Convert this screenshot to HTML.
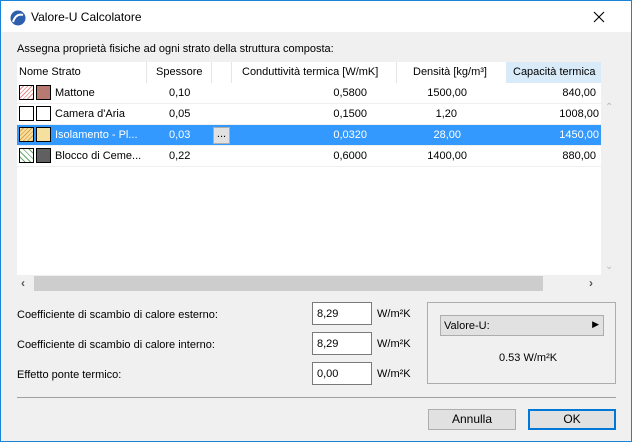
<!DOCTYPE html>
<html><head><meta charset="utf-8"><style>
*{box-sizing:border-box;margin:0;padding:0}
body{width:632px;height:442px;overflow:hidden;background:#f0f0f0;font-family:"Liberation Sans",sans-serif;font-size:11px;color:#000;position:relative}
.win{position:absolute;left:0;top:0;width:632px;height:442px;border:1px solid #1883d7;background:#f0f0f0}
.title{position:absolute;left:0;top:0;width:630px;height:31px;background:#fff}
.a{position:absolute;white-space:nowrap}
.tbl{position:absolute;left:16px;top:61px;width:584px;height:213px;background:#fff}
.row{position:absolute;left:0;width:584px;height:21px;border-bottom:1px solid #f0f0f0}
.c{position:absolute;top:4px;white-space:nowrap}
.r{text-align:right}
.sw{position:absolute;top:2px;width:15px;height:15px;border:1px solid #000}
.inp{position:absolute;width:60px;height:23px;background:#fff;border:1px solid #7a7a7a;padding:5px 4px}
.btn{position:absolute;background:#e1e1e1;border:1px solid #adadad;text-align:center;line-height:18px;font-size:12px}
</style></head><body><div class="win">
<div class="title"></div>
<svg class="a" style="left:9px;top:9px" width="16" height="16" viewBox="0 0 16 16"><circle cx="8" cy="8" r="7.5" fill="#2e5fae"/><path d="M3 12 Q6 3 13 5" stroke="#fff" stroke-width="2" fill="none"/></svg>
<div class="a" style="left:30px;top:9px;font-size:12px">Valore-U Calcolatore</div>
<svg class="a" style="left:592px;top:10px" width="12" height="12" viewBox="0 0 12 12"><path d="M1 1L11 11M11 1L1 11" stroke="#000" stroke-width="1.1"/></svg>
<div class="a" style="left:16px;top:42px">Assegna proprietà fisiche ad ogni strato della struttura composta:</div>
<div class="tbl">
 <div class="row" style="top:0;border:none">
  <div style="position:absolute;left:489px;top:0;width:95px;height:21px;background:#d9ebf9"></div>
  <div style="position:absolute;left:129px;top:0;height:21px;border-left:1px solid #e5e5e5"></div>
  <div style="position:absolute;left:194px;top:0;height:21px;border-left:1px solid #e5e5e5"></div>
  <div style="position:absolute;left:214px;top:0;height:21px;border-left:1px solid #e5e5e5"></div>
  <div style="position:absolute;left:379px;top:0;height:21px;border-left:1px solid #e5e5e5"></div>
  <div class="c" style="left:2px">Nome Strato</div>
  <div class="c" style="left:139px">Spessore</div>
  <div class="c" style="left:225px">Conduttività termica [W/mK]</div>
  <div class="c" style="left:396px">Densità [kg/m³]</div>
  <div class="c" style="left:496px">Capacità termica</div>
 </div>
 <div class="row" style="top:21px">
  <div class="sw" style="left:2px;background:repeating-linear-gradient(135deg,#fff 0 2px,#e88 2px 3px)"></div><div class="sw" style="left:19px;background:#b87a70"></div>
  <div class="c" style="left:38px">Mattone</div><div class="c" style="left:152px">0,10</div>
  <div class="c r" style="left:250px;width:100px">0,5800</div><div class="c r" style="left:380px;width:70px">1500,00</div><div class="c r" style="left:480px;width:99px">840,00</div>
 </div>
 <div class="row" style="top:42px">
  <div class="sw" style="left:2px;background:#fff"></div><div class="sw" style="left:19px;background:#fff"></div>
  <div class="c" style="left:38px">Camera d'Aria</div><div class="c" style="left:152px">0,05</div>
  <div class="c r" style="left:250px;width:100px">0,1500</div><div class="c r" style="left:380px;width:60px">1,20</div><div class="c r" style="left:480px;width:102px">1008,00</div>
 </div>
 <div class="row" style="top:63px;background:#3399ff;color:#fff">
  <div class="sw" style="left:2px;background:repeating-linear-gradient(135deg,#f5dfa0 0 2px,#e0a040 2px 3px)"></div><div class="sw" style="left:19px;background:#f5e0a0"></div>
  <div class="c" style="left:38px">Isolamento - Pl...</div><div class="c" style="left:152px">0,03</div>
  <div style="position:absolute;left:196px;top:2px;width:17px;height:17px;background:#e1e1e1;border:1px solid #adadad;color:#000;text-align:center;line-height:12px">...</div>
  <div class="c r" style="left:250px;width:100px">0,0320</div><div class="c r" style="left:380px;width:64px">28,00</div><div class="c r" style="left:480px;width:102px">1450,00</div>
 </div>
 <div class="row" style="top:84px">
  <div class="sw" style="left:2px;background:repeating-linear-gradient(45deg,#fff 0 3px,#6a6 3px 4px)"></div><div class="sw" style="left:19px;background:#606060"></div>
  <div class="c" style="left:38px">Blocco di Ceme...</div><div class="c" style="left:152px">0,22</div>
  <div class="c r" style="left:250px;width:100px">0,6000</div><div class="c r" style="left:380px;width:70px">1400,00</div><div class="c r" style="left:480px;width:99px">880,00</div>
 </div>
</div>
<div class="a" style="left:604px;top:101px;color:#bbb;font-size:10px">⌃</div>
<div class="a" style="left:604px;top:260px;color:#bbb;font-size:10px">⌄</div>
<div class="a" style="left:16px;top:274px;width:584px;height:16px;background:#f0f0f0"></div>
<div class="a" style="left:33px;top:275px;width:509px;height:15px;background:#cdcdcd"></div>
<div class="a" style="left:20px;top:275px;color:#555;font-size:12px;font-weight:bold">‹</div>
<div class="a" style="left:588px;top:275px;color:#555;font-size:12px;font-weight:bold">›</div>
<div class="a" style="left:16px;top:308px">Coefficiente di scambio di calore esterno:</div>
<div class="a" style="left:16px;top:338px">Coefficiente di scambio di calore interno:</div>
<div class="a" style="left:16px;top:368px">Effetto ponte termico:</div>
<div class="inp" style="left:311px;top:301px">8,29</div>
<div class="inp" style="left:311px;top:331px">8,29</div>
<div class="inp" style="left:311px;top:361px">0,00</div>
<div class="a" style="left:376px;top:307px">W/m²K</div>
<div class="a" style="left:376px;top:337px">W/m²K</div>
<div class="a" style="left:376px;top:367px">W/m²K</div>
<div class="a" style="left:426px;top:301px;width:189px;height:82px;border:1px solid #adadad"></div>
<div class="a" style="left:439px;top:314px;width:164px;height:21px;background:#e1e1e1;border:1px solid #adadad;padding:4px 3px">Valore-U:<span style="position:absolute;right:4px;top:3px;font-size:9px">▶</span></div>
<div class="a" style="left:498px;top:351px">0.53 W/m²K</div>
<div class="a" style="left:16px;top:396px;width:599px;height:1px;background:#a0a0a0"></div>
<div class="btn" style="left:427px;top:408px;width:88px;height:21px">Annulla</div>
<div class="btn" style="left:527px;top:408px;width:88px;height:21px;border:2px solid #0078d7;line-height:17px">OK</div>
</div></body></html>
